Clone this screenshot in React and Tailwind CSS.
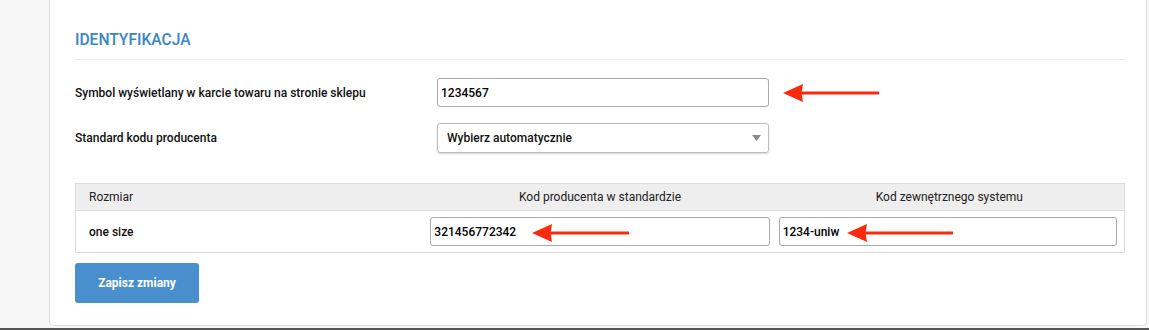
import React from "react";

const font = { fontFamily: "Roboto, 'Liberation Sans', sans-serif" };

const Arrow = ({ className, length }) => (
    <svg className={className} width={length} height="20" viewBox={`0 0 ${length} 20`}>
        <polygon points="0,10 20,1 18.5,10 20,19" fill="#fb2a0c" />
        <rect x="17" y="8.5" width={length - 17} height="3" fill="#fb2a0c" />
    </svg>
);

export default function App() {
    return (
        <div className="h-[330px] w-full bg-[#f7f7f7] flex flex-col overflow-hidden" style={font}>
            <div className="relative flex-1 ml-[49px] mr-[2px] mb-[2px] bg-white border-x border-b border-[#dcdcdc] rounded-b-[5px] pl-[25px] pr-[21px]">
                <div className="pt-[31px] pb-[10px] border-b border-[#ececec]">
                    <h2 className="text-[15.6px] leading-[18px] font-medium text-[#3a85c6]">IDENTYFIKACJA</h2>
                </div>

                <div className="flex items-center mt-[18px] h-[29px]">
                    <label className="w-[362px] text-[12px] font-medium text-[#111]">Symbol wyświetlany w karcie towaru na stronie sklepu</label>
                    <input
                        readOnly
                        value="1234567"
                        className="w-[332px] h-[29px] border border-[#a9a9a9] rounded-[3px] pl-[3px] text-[12px] font-medium text-black outline-none"
                    />
                </div>

                <div className="flex items-center mt-[16px] h-[30px]">
                    <label className="w-[362px] text-[12px] font-medium text-[#111]">Standard kodu producenta</label>
                    <div className="w-[332px] h-[30px] border border-[#bdbdbd] rounded-[3px] shadow-[0_1px_2px_rgba(0,0,0,0.18)] flex items-center justify-between pl-[9px] pr-[7px]">
                        <span className="text-[12px] font-medium text-[#111]">Wybierz automatycznie</span>
                        <svg width="9" height="6" viewBox="0 0 9 6"><polygon points="0,0 9,0 4.5,6" fill="#8a8a8a" /></svg>
                    </div>
                </div>

                <div className="mt-[30px] border border-[#dedede]">
                    <div className="grid grid-cols-3 h-[27px] items-center bg-[#eeeeee] border-b border-[#dedede] text-[12px] text-[#222]">
                        <div className="pl-[13px]">Rozmiar</div>
                        <div className="text-center">Kod producenta w standardzie</div>
                        <div className="text-center">Kod zewnętrznego systemu</div>
                    </div>
                    <div className="grid grid-cols-3 h-[41px] items-center text-[12px]">
                        <div className="pl-[13px] font-medium text-[#111]">one size</div>
                        <div className="pl-[5px] pr-[5px]">
                            <input readOnly value="321456772342" className="w-full h-[29px] border border-[#a9a9a9] rounded-[3px] pl-[3px] font-medium text-black outline-none" />
                        </div>
                        <div className="pl-[4px] pr-[7px]">
                            <input readOnly value="1234-uniw" className="w-full h-[29px] border border-[#a9a9a9] rounded-[3px] pl-[3px] font-medium text-black outline-none" />
                        </div>
                    </div>
                </div>

                <button className="mt-[10px] w-[124px] h-[40px] bg-[#4a8fcd] rounded-[3px] text-white text-[12px] font-bold">
                    Zapisz zmiany
                </button>

                <Arrow className="absolute left-[733px] top-[83px]" length={96} />
                <Arrow className="absolute left-[482px] top-[223px]" length={97} />
                <Arrow className="absolute left-[797px] top-[223px]" length={106} />
            </div>
            <div className="h-[2px] bg-[#555]" />
        </div>
    );
}
